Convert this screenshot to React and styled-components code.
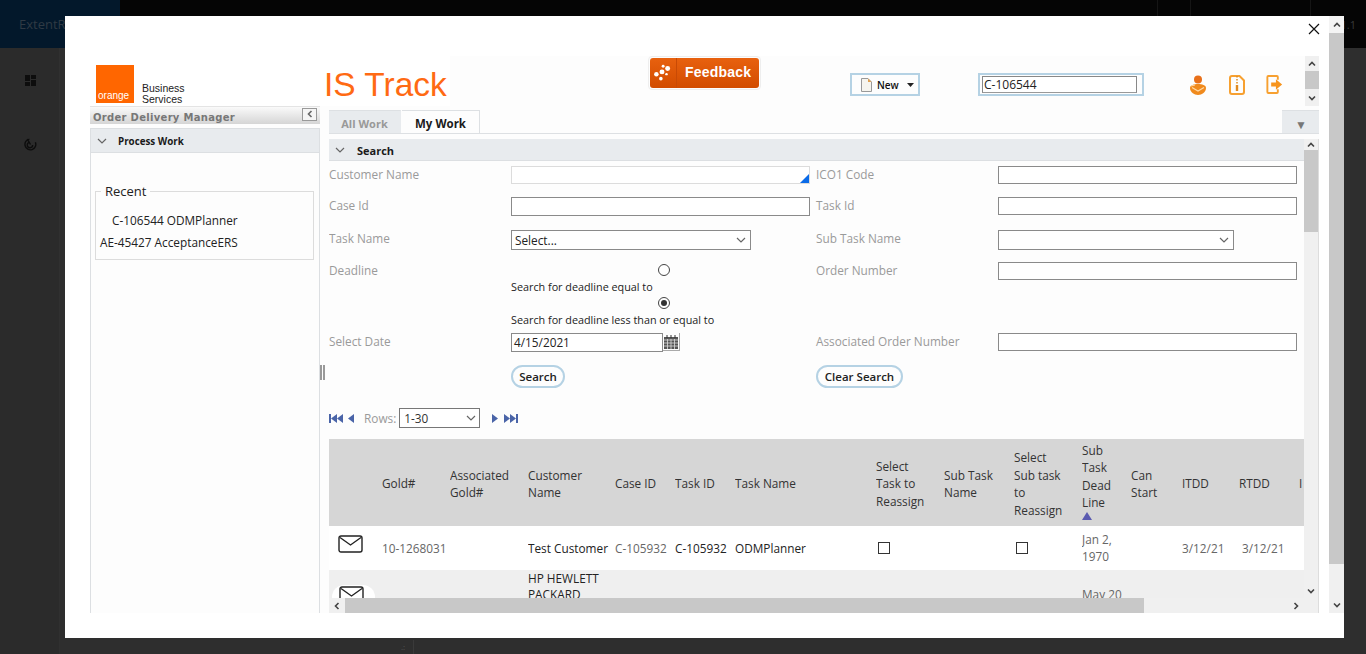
import React from "react";
import styled, { createGlobalStyle } from "styled-components";

const Global = createGlobalStyle`
  html, body { margin: 0; padding: 0; height: 100%; overflow: hidden; background: #2e2e2e; }
  #root { height: 100%; }
  * { box-sizing: border-box; }
`;

const Shell = styled.div`
  position: relative;
  width: 1366px;
  height: 654px;
  display: flex;
  flex-direction: column;
  overflow: hidden;
  font-family: "Open Sans", "Liberation Sans", sans-serif;
  font-size: 11.8px;
  color: #222;
`;
const TopBar = styled.div`
  height: 48px;
  flex: none;
  display: flex;
  align-items: center;
  background: #050505;
  color: #2f3a44;
  font-size: 13px;
`;
const Brand = styled.div`
  width: 120px;
  height: 100%;
  padding-left: 19px;
  display: flex;
  align-items: center;
  background: #03182b;
`;
const TopCell = styled.div`
  width: ${(p) => p.$w}px;
  height: 100%;
  flex: none;
  margin-left: ${(p) => (p.$first ? "auto" : "0")};
  border-left: 1px solid #151515;
  display: flex;
  align-items: center;
  justify-content: flex-end;
  padding-right: 10px;
  color: #3a3a3a;
  font-size: 11px;
`;
const BackBody = styled.div`
  flex: 1;
  display: flex;
`;
const Rail = styled.div`
  width: 60px;
  background: #2b2b2b;
  border-right: 1px solid #303030;
  padding: 27px 0 0 2px;
  display: flex;
  flex-direction: column;
  align-items: center;
  gap: 52px;
  color: #101010;
`;
const Foot = styled.div`
  margin: auto 0 0 341px;
  width: 13px;
  height: 14px;
  border-right: 1px solid #3a3a3a;
  color: #555;
  font-size: 8px;
  line-height: 14px;
`;

const Modal = styled.div`
  position: absolute;
  left: 65px;
  top: 16px;
  width: 1279px;
  height: 622px;
  background: #fff;
  padding: 0 0 25px 25px;
  display: flex;
  overflow: hidden;
`;
const Close = styled.div`
  position: absolute;
  left: 1243px;
  top: 7px;
  width: 12px;
  height: 12px;
  color: #111;
  line-height: 0;
`;
const Frame = styled.div`
  width: 1229px;
  margin-top: 40px;
  display: flex;
  flex-direction: column;
  background: #fdfdfd;
`;
const OuterBar = styled.div`
  width: 15px;
  margin-left: 10px;
  display: flex;
  flex-direction: column;
  background: #f0f0f0;
`;
const Header = styled.div`
  height: 50px;
  flex: none;
  display: flex;
  align-items: flex-start;
`;
const LogoArea = styled.div`
  width: 360px;
  height: 50px;
  padding: 9px 0 0 6px;
  display: flex;
  background: #fff;
`;
const OrangeSquare = styled.div`
  width: 38px;
  height: 38px;
  background: #ff6600;
  color: #fff;
  font: 400 10px/1 "Liberation Sans", sans-serif;
  display: flex;
  align-items: flex-end;
  padding: 0 0 2px 2px;
  flex: none;
`;
const Business = styled.div`
  margin: 18px 0 0 8px;
  width: 182px;
  font: 10.5px/11px "Liberation Sans", sans-serif;
  color: #222;
  flex: none;
`;
const AppTitle = styled.div`
  font: 33.5px/40px "Liberation Sans", sans-serif;
  color: #ff6a13;
  white-space: nowrap;
`;
const Feedback = styled.div`
  margin-left: 198px;
  width: 113px;
  height: 34px;
  border: 1px solid #eee;
  border-radius: 4px;
  padding: 1px;
  flex: none;
`;
const FeedbackInner = styled.div`
  height: 100%;
  border-radius: 3px;
  background: linear-gradient(#e8610f, #d24c00);
  display: flex;
  align-items: center;
  color: #fff;
  font: 700 14px "Liberation Sans", sans-serif;
  letter-spacing: 0.2px;
`;
const FeedIcon = styled.span`
  width: 27px;
  height: 100%;
  flex: none;
  display: flex;
  align-items: center;
  justify-content: center;
  padding-right: 3px;
  border-right: 1px solid #c94a05;
  margin-right: 8px;
`;
const FeedText = styled.span`
  margin-top: -2px;
`;
const NewBtn = styled.div`
  margin: 17px 0 0 89px;
  width: 70px;
  height: 23px;
  border: 2px solid #b5d2e4;
  display: flex;
  align-items: center;
  padding-left: 9px;
  gap: 5px;
  font-size: 10px;
  font-weight: 600;
  color: #111;
  flex: none;
`;
const SearchBox = styled.div`
  margin: 17px 0 0 58px;
  width: 166px;
  height: 23px;
  border: 2px solid #b5d2e4;
  padding: 1px 5px 1px 2px;
  flex: none;
`;
const SearchValue = styled.div`
  height: 100%;
  border: 1px solid #888;
  border-bottom-color: #999;
  background: #fff;
  padding-left: 1px;
  font-size: 12px;
  line-height: 16px;
  color: #222;
`;
const HeadIcons = styled.div`
  margin: 19px 0 0 45px;
  width: 94px;
  display: flex;
  justify-content: space-between;
  flex: none;
`;
const HeadBar = styled.div`
  width: 14px;
  height: 50px;
  margin-left: 22px;
  background: #f0f0f0;
  display: flex;
  flex-direction: column;
  flex: none;
`;
const Arrow = styled.div`
  height: ${(p) => p.$h || 15}px;
  width: ${(p) => p.$w || "100%"};
  margin-bottom: ${(p) => p.$mb || 0}px;
  flex: none;
  display: flex;
  align-items: center;
  justify-content: center;
  background: ${(p) => p.$bg || "transparent"};
  color: #444;
`;
const Thumb = styled.div`
  background: #c8c8c8;
  flex: none;
  height: ${(p) => (p.$h ? `${p.$h}px` : "auto")};
  width: ${(p) => (p.$w ? `${p.$w}px` : "auto")};
`;
const Spacer = styled.div`
  flex: 1;
`;

const Content = styled.div`
  flex: 1;
  min-height: 0;
  display: flex;
`;
const Sidebar = styled.div`
  width: 230px;
  flex: none;
  display: flex;
  flex-direction: column;
`;
const SideTitle = styled.div`
  height: 18px;
  flex: none;
  background: linear-gradient(#fafafa, #d5d5d5);
  border-top: 1px solid #e4e4e4;
  display: flex;
  align-items: center;
  justify-content: space-between;
  padding: 3px 3px 0 3px;
  font: 700 10px "DejaVu Sans", sans-serif;
  letter-spacing: 0.3px;
  color: #777;
`;
const Collapse = styled.div`
  width: 15px;
  height: 13px;
  margin-top: -6px;
  border: 1px solid #999;
  background: #f5f5f5;
  display: flex;
  align-items: center;
  justify-content: center;
  color: #555;
`;
const SidePanel = styled.div`
  margin-top: 4px;
  flex: 1;
  border: 1px solid #dcdfe2;
  border-bottom: none;
  display: flex;
  flex-direction: column;
`;
const PanelHead = styled.div`
  height: ${(p) => p.$h || 24}px;
  flex: none;
  background: #e8ebee;
  border-bottom: 1px solid #dcdfe2;
  display: flex;
  align-items: center;
  padding: 1px 0 0 ${(p) => p.$pad || 6}px;
  gap: ${(p) => p.$gap || 11}px;
  font-weight: 700;
  font-size: ${(p) => p.$size || 9.8}px;
  color: #1a1a1a;
`;
const Fieldset = styled.fieldset`
  margin: 29px 5px 0 4px;
  padding: 9px 4px 0;
  height: 78px;
  border: 1px solid #dcdcdc;
  min-width: 0;
`;
const Legend = styled.legend`
  font-size: 13px;
  line-height: 18px;
  padding: 0 4px;
  margin-left: 1px;
  color: #222;
`;
const RecentRow = styled.div`
  height: 22px;
  line-height: 22px;
  padding-left: ${(p) => (p.$in ? 12 : 0)}px;
  color: #222;
`;
const Splitter = styled.div`
  width: 9px;
  flex: none;
  padding-top: 259px;
`;
const Grip = styled.div`
  width: 5px;
  height: 15px;
  border-left: 2px solid #999;
  border-right: 2px solid #999;
`;
const MainCol = styled.div`
  width: 990px;
  flex: none;
  display: flex;
  flex-direction: column;
  margin-top: 4px;
`;
const Tabs = styled.div`
  height: 24px;
  flex: none;
  display: flex;
  border-bottom: 1px solid #dde0e3;
`;
const Tab = styled.div`
  width: ${(p) => p.$w}px;
  margin-right: 1px;
  padding-top: ${(p) => (p.$on ? 3 : 2)}px;
  display: flex;
  align-items: center;
  justify-content: center;
  background: ${(p) => (p.$on ? "#fdfdfd" : "#e8ebee")};
  color: ${(p) => (p.$on ? "#1a1a1a" : "#999")};
  font-size: ${(p) => (p.$on ? 11.5 : 11)}px;
  font-weight: 700;
  border-top: 1px solid #dde0e3;
  border-right: 1px solid ${(p) => (p.$on ? "#dde0e3" : "transparent")};
`;
const TabMenu = styled.div`
  margin-left: auto;
  width: 37px;
  background: #e8ebee;
  color: #777;
  font-size: 12px;
  display: flex;
  align-items: center;
  justify-content: center;
  border-top: 1px solid #dde0e3;
  padding: 4px 0 0 1px;
`;
const Work = styled.div`
  flex: 1;
  min-height: 0;
  margin-top: 5px;
  display: flex;
`;
const WorkLeft = styled.div`
  width: 975px;
  flex: none;
  display: flex;
  flex-direction: column;
  overflow: hidden;
`;
const Form = styled.div`
  display: grid;
  grid-template-columns: 182px 299px 6px 182px 299px;
  grid-template-rows: 31px 33px 32px 71px 32px 23px;
  padding-top: 5px;
  height: 227px;
  flex: none;
`;
const Label = styled.div`
  grid-column: ${(p) => (p.$right ? 4 : 1)};
  color: #9a9a9a;
  font-size: 11.8px;
  line-height: 17px;
`;
const Field = styled.div`
  grid-column: ${(p) => (p.$col ? p.$col : p.$right ? 5 : 2)};
  min-width: 0;
`;
const TextInput = styled.div`
  width: ${(p) => p.$w || "100%"};
  height: ${(p) => p.$h || 18}px;
  background: #fff;
  border: 1px solid ${(p) => (p.$light ? "#dcdcdc" : "#8a8a8a")};
  position: relative;
  padding-left: 2px;
  font-size: 11.8px;
  line-height: 17px;
  color: #222;
`;
const Corner = styled.span`
  position: absolute;
  right: 0;
  bottom: 0;
  width: 0;
  height: 0;
  border-left: 9px solid transparent;
  border-bottom: 9px solid #0b6be8;
`;
const SelectBox = styled.div`
  width: ${(p) => p.$w};
  height: 20px;
  border: 1px solid #8a8a8a;
  background: #fff;
  display: flex;
  align-items: center;
  justify-content: space-between;
  padding: 0 4px 0 3px;
  color: #222;
`;
const DateRow = styled.div`
  display: flex;
  align-items: flex-start;
`;
const CalIcon = styled.div`
  width: 17px;
  height: 18px;
  flex: none;
  display: flex;
  align-items: center;
  justify-content: center;
  border-right: 1px solid #aaa;
  border-bottom: 1px solid #aaa;
`;
const RadioWrap = styled.div`
  display: flex;
  flex-direction: column;
  align-items: flex-start;
`;
const RadioLine = styled.div`
  height: 16px;
  width: 100%;
  padding-left: 147px;
  display: flex;
  align-items: center;
`;
const Radio = styled.span`
  width: 12px;
  height: 12px;
  border-radius: 50%;
  border: 1px solid #444;
  background: #fff;
  display: flex;
  align-items: center;
  justify-content: center;
  &::after {
    content: "";
    width: 6px;
    height: 6px;
    border-radius: 50%;
    background: ${(p) => (p.$on ? "#333" : "transparent")};
  }
`;
const RadioText = styled.div`
  height: 17px;
  line-height: 17px;
  font-size: 10.8px;
  white-space: nowrap;
  color: #222;
`;
const Pill = styled.div`
  width: ${(p) => p.$w}px;
  height: 23px;
  border: 2px solid #b5d2e4;
  border-radius: 12px;
  padding-bottom: 1px;
  display: flex;
  align-items: center;
  justify-content: center;
  font-size: 11.5px;
  font-weight: 600;
  color: #222;
`;
const Pager = styled.div`
  height: 20px;
  margin-top: 20px;
  flex: none;
  display: flex;
  align-items: center;
  color: #9a9a9a;
`;
const PagerGap = styled.span`
  width: ${(p) => p.$w}px;
  flex: none;
`;
const RowsBox = styled.div`
  width: 81px;
  height: 20px;
  margin: 0 12px 0 3px;
  border: 1px solid #777;
  background: #fff;
  display: flex;
  align-items: center;
  justify-content: space-between;
  padding: 0 3px 0 4px;
  color: #333;
`;
const TableClip = styled.div`
  margin-top: 11px;
  height: 159px;
  flex: none;
  overflow: hidden;
  position: relative;
`;
const Table = styled.table`
  border-collapse: collapse;
  table-layout: fixed;
  width: 975px;
  line-height: 17px;
`;
const Th = styled.th`
  height: 87px;
  background: #d6d6d6;
  text-align: left;
  font-weight: 400;
  line-height: 17.5px;
  color: #333;
  padding: ${(p) => p.$pt ?? 3}px ${(p) => p.$pr ?? 9}px ${(p) => p.$pb ?? 0}px 0;
  vertical-align: middle;
  overflow: hidden;
`;
const Tr = styled.tr`
  background: ${(p) => (p.$alt ? "#efefef" : "#fff")};
`;
const Td = styled.td`
  height: ${(p) => p.$h || 44}px;
  padding: ${(p) => p.$pt || 0}px 0 0 ${(p) => p.$pl || 0}px;
  white-space: ${(p) => (p.$wrap ? "normal" : "nowrap")};
  color: ${(p) => (p.$dim ? "#666" : "#222")};
  vertical-align: ${(p) => p.$va || "middle"};
  line-height: ${(p) => p.$lh || 17}px;
  overflow: hidden;
`;
const MailCell = styled.div`
  padding: 0 0 9px 9px;
  line-height: 0;
`;
const Check = styled.span`
  display: block;
  width: 12px;
  height: 12px;
  margin-left: 2px;
  border: 1px solid #333;
  background: #fff;
`;
const Badge = styled.span`
  position: absolute;
  left: 3px;
  bottom: 0;
  width: 43px;
  height: 13px;
  background: #fff;
  border-radius: 12px 12px 0 0;
  padding: 1px 0 0 7px;
  overflow: hidden;
  line-height: 0;
`;
const HBar = styled.div`
  height: 15px;
  flex: none;
  background: #f0f0f0;
  display: flex;
  align-items: stretch;
`;
const VBar = styled.div`
  width: 15px;
  flex: none;
  background: #f0f0f0;
  border-right: 1px solid #ddd;
  display: flex;
  flex-direction: column;
`;

const Caret = ({ d = "up", c = "#444" }) => {
  const p = {
    up: "M1 5.500 L4 2.500 L7 5.500",
    down: "M1 2.500 L4 5.500 L7 2.500",
    left: "M5.500 1 L2.500 4 L5.500 7",
    right: "M2.500 1 L5.500 4 L2.500 7",
  }[d];
  return (
    <svg width="8" height="8" viewBox="0 0 8 8" fill="none" stroke={c} strokeWidth="1.6">
      <path d={p} />
    </svg>
  );
};
const Chevron = () => (
  <svg width="10" height="10" viewBox="0 0 10 10" fill="none" stroke="#666" strokeWidth="1.2">
    <path d="M1 3 L5 7 L9 3" />
  </svg>
);
const Mail = () => (
  <svg width="25" height="18" viewBox="0 0 25 18" fill="none" stroke="#222" strokeWidth="1.4">
    <rect x="1" y="1" width="23" height="16" rx="2" />
    <path d="M2 2.500 L12.500 10 L23 2.500" />
  </svg>
);
const PagerTri = ({ dir, bar, dbl }) => {
  const w = dbl ? 14 : 7;
  return (
    <svg width={w} height="11" viewBox={`0 0 ${w} 11`} fill="#4a64a8" style={{ transform: dir === "l" ? "scaleX(-1)" : "none" }}>
      <path d="M0 1 L6 5.500 L0 10 Z" />
      {dbl && <path d="M6 1 L12 5.500 L6 10 Z" />}
      {bar && <rect x="12" y="1" width="2" height="9" />}
    </svg>
  );
};

const columns = [53, 68, 78, 87, 60, 60, 141, 68, 70, 68, 49, 51, 57, 60, 5];

const headers = ["", "Gold#", "Associated Gold#", "Customer Name", "Case ID", "Task ID", "Task Name", "Select Task to Reassign", "Sub Task Name", "Select Sub task to Reassign", "Sub Task Dead Line", "Can Start", "ITDD", "RTDD", "I"];

const emptyCells = (n) => Array.from({ length: n }, (_, i) => <Td key={i} $h={60} />);

export default function App() {
  return (
    <Shell>
      <Global />
      <TopBar>
        <Brand>ExtentReports</Brand>
        <TopCell $first $w={33} />
        <TopCell $w={120} />
        <TopCell $w={56}>1.1</TopCell>
      </TopBar>
      <BackBody>
        <Rail>
          <svg width="11" height="11" viewBox="0 0 11 11" fill="#0d0d0d"><rect width="5" height="6" /><rect x="6" width="5" height="4" /><rect y="7" width="5" height="4" /><rect x="6" y="5" width="5" height="6" /></svg>
          <svg width="13" height="13" viewBox="0 0 12 12" fill="none" stroke="#0d0d0d" strokeWidth="1.3"><path d="M5 1 A5 5 0 1 0 10.500 4" /><path d="M5 4 A2.500 2.500 0 1 0 8 6.500" /><path d="M6 6 L3 1" /></svg>
        </Rail>
        <Foot>.:</Foot>
      </BackBody>

      <Modal>
        <Close>
          <svg width="12" height="12" viewBox="0 0 12 12" stroke="#111" strokeWidth="1.2"><path d="M1 1 L11 11 M11 1 L1 11" /></svg>
        </Close>
        <Frame>
          <Header>
            <LogoArea>
              <OrangeSquare>orange</OrangeSquare>
              <Business>Business<br />Services</Business>
              <AppTitle>IS Track</AppTitle>
            </LogoArea>
            <Feedback>
              <FeedbackInner>
                <FeedIcon>
                  <svg width="18" height="18" viewBox="0 0 16 16" fill="#fff"><circle cx="3" cy="9" r="2" /><circle cx="8" cy="7" r="2.200" /><circle cx="13" cy="4" r="2.200" /><circle cx="9" cy="2" r="1.300" /><circle cx="7" cy="13" r="1.600" /><circle cx="12" cy="9" r="1.100" /></svg>
                </FeedIcon>
                <FeedText>Feedback</FeedText>
              </FeedbackInner>
            </Feedback>
            <NewBtn>
              <svg width="11" height="14" viewBox="0 0 11 14"><path d="M.5.5 H7 L10.500 4 V13.500 H.5 Z" fill="#f6f4ee" stroke="#999" /><path d="M7 .5 V4 H10.500 Z" fill="#e0a050" /></svg>
              New
              <svg width="7" height="4" viewBox="0 0 7 4" fill="#222" style={{ marginLeft: 3 }}><path d="M0 0 H7 L3.500 4 Z" /></svg>
            </NewBtn>
            <SearchBox>
              <SearchValue>C-106544</SearchValue>
            </SearchBox>
            <HeadIcons>
              <svg width="18" height="21" viewBox="0 0 18 21" fill="#f08a1d"><circle cx="9" cy="4.500" r="4" fill="#e8701a" /><path d="M1 13 C1 10 5 9 9 9 C13 9 17 10 17 13 C17 17 13 20 9 20 C5 20 1 17 1 13 Z" /><path d="M3 12.500 L9 16 L15 12.500" stroke="#ffd9a8" strokeWidth="1.200" fill="none" /><path d="M2 11 L6 10" stroke="#ffd9a8" strokeWidth="1" /></svg>
              <svg width="16" height="20" viewBox="0 0 16 20" fill="none" stroke="#f7a030" strokeWidth="2"><path d="M3 1 H10.500 L15 5.500 V17 A2 2 0 0 1 13 19 H3 A2 2 0 0 1 1 17 V3 A2 2 0 0 1 3 1 Z" /><path d="M8 1 V9" strokeDasharray="1.500 1.500" strokeWidth="1.500" stroke="#e08a20" /><path d="M8 10 V16" strokeWidth="2.400" stroke="#e08a20" /></svg>
              <svg width="17" height="19" viewBox="0 0 17 20" fill="none"><path d="M12 5 V2 A1 1 0 0 0 11 1 H2 A1 1 0 0 0 1 2 V18 A1 1 0 0 0 2 19 H11 A1 1 0 0 0 12 18 V15" stroke="#f7a030" strokeWidth="2" /><path d="M5 8 H10 V4.500 L16.500 10 L10 15.500 V12 H5 Z" fill="#f7941d" /></svg>
            </HeadIcons>
            <HeadBar>
              <Arrow $h={15}><Caret d="up" /></Arrow>
              <Thumb $h={18} />
              <Arrow $h={17}><Caret d="down" /></Arrow>
            </HeadBar>
          </Header>
          <Content>
            <Sidebar>
              <SideTitle>
                Order Delivery Manager
                <Collapse><Caret d="left" c="#666" /></Collapse>
              </SideTitle>
              <SidePanel>
                <PanelHead>
                  <Chevron />
                  Process Work
                </PanelHead>
                <Fieldset>
                  <Legend>Recent</Legend>
                  <RecentRow $in>C-106544 ODMPlanner</RecentRow>
                  <RecentRow>AE-45427 AcceptanceERS</RecentRow>
                </Fieldset>
              </SidePanel>
            </Sidebar>
            <Splitter><Grip /></Splitter>
            <MainCol>
              <Tabs>
                <Tab $w={72}>All Work</Tab>
                <Tab $w={78} $on>My Work</Tab>
                <TabMenu>▼</TabMenu>
              </Tabs>
              <Work>
                <WorkLeft>
                  <PanelHead $h={22} $gap={12} $size={11}>
                    <Chevron />
                    Search
                  </PanelHead>
                  <Form>
                    <Label>Customer Name</Label>
                    <Field><TextInput $light><Corner /></TextInput></Field>
                    <Label $right>ICO1 Code</Label>
                    <Field $right><TextInput /></Field>

                    <Label>Case Id</Label>
                    <Field><TextInput $h={19} /></Field>
                    <Label $right>Task Id</Label>
                    <Field $right><TextInput /></Field>

                    <Label>Task Name</Label>
                    <Field><SelectBox $w="240px">Select...<Chevron /></SelectBox></Field>
                    <Label $right>Sub Task Name</Label>
                    <Field $right><SelectBox $w="236px"><span /><Chevron /></SelectBox></Field>

                    <Label>Deadline</Label>
                    <Field>
                      <RadioWrap>
                        <RadioLine><Radio /></RadioLine>
                        <RadioText>Search for deadline equal to</RadioText>
                        <RadioLine><Radio $on /></RadioLine>
                        <RadioText>Search for deadline less than or equal to</RadioText>
                      </RadioWrap>
                    </Field>
                    <Label $right>Order Number</Label>
                    <Field $right><TextInput /></Field>

                    <Label>Select Date</Label>
                    <Field>
                      <DateRow>
                        <TextInput $w="152px" $h={19}>4/15/2021</TextInput>
                        <CalIcon>
                          <svg width="14" height="14" viewBox="0 0 14 14"><path d="M0 2 H14 V14 H0 Z" fill="#555" /><path d="M0 5 H14 M0 8 H14 M0 11 H14 M3.500 4 V14 M7 4 V14 M10.500 4 V14" stroke="#ddd" strokeWidth="0.8" /><path d="M3 0 V3 M7 0 V3 M11 0 V3" stroke="#333" /></svg>
                        </CalIcon>
                      </DateRow>
                    </Field>
                    <Label $right>Associated Order Number</Label>
                    <Field $right><TextInput /></Field>

                    <Field $col={2}><Pill $w={54}>Search</Pill></Field>
                    <Field $col={4}><Pill $w={87}>Clear Search</Pill></Field>
                  </Form>
                  <Pager>
                    <PagerTri dir="l" bar dbl />
                    <PagerGap $w={4} />
                    <PagerTri dir="l" />
                    <PagerGap $w={10} />
                    Rows:
                    <RowsBox>1-30<Chevron /></RowsBox>
                    <PagerTri dir="r" />
                    <PagerGap $w={5} />
                    <PagerTri dir="r" bar dbl />
                  </Pager>
                  <TableClip>
                    <Table>
                      <colgroup>
                        {columns.map((w, i) => <col key={i} style={{ width: w }} />)}
                      </colgroup>
                      <thead>
                        <tr>
                          {headers.map((h, i) => (
                            <Th key={i} $pr={i === 9 ? 14 : i === 14 ? 0 : 9} $pt={i === 10 ? 0 : 3} $pb={i === 10 ? 4 : 0}>
                              {h}
                              {i === 10 && (
                                <svg width="10" height="8" viewBox="0 0 10 8" style={{ display: "block" }}><path d="M5 0 L10 8 H0 Z" fill="#5a5ab0" /></svg>
                              )}
                            </Th>
                          ))}
                        </tr>
                      </thead>
                      <tbody>
                        <Tr>
                          <Td><MailCell><Mail /></MailCell></Td>
                          <Td $dim>10-1268031</Td>
                          <Td />
                          <Td>Test Customer</Td>
                          <Td $dim>C-105932</Td>
                          <Td>C-105932</Td>
                          <Td>ODMPlanner</Td>
                          <Td><Check /></Td>
                          <Td />
                          <Td><Check /></Td>
                          <Td $wrap $dim>Jan 2, 1970</Td>
                          <Td />
                          <Td $dim>3/12/21</Td>
                          <Td $dim $pl={3}>3/12/21</Td>
                          <Td />
                        </Tr>
                        <Tr $alt>
                          <Td $h={60} />
                          <Td $h={60} />
                          <Td $h={60} />
                          <Td $h={60} $wrap $va="top" $lh={16}>HP HEWLETT PACKARD</Td>
                          {emptyCells(6)}
                          <Td $h={60} $va="top" $pt={16} $dim>May 20</Td>
                          {emptyCells(4)}
                        </Tr>
                      </tbody>
                    </Table>
                    <Badge><Mail /></Badge>
                  </TableClip>
                  <HBar>
                    <Arrow $h={15} $w="16px"><Caret d="left" /></Arrow>
                    <Thumb $w={799} />
                    <Spacer />
                    <Arrow $h={15} $w="16px"><Caret d="right" /></Arrow>
                  </HBar>
                </WorkLeft>
                <VBar>
                  <Arrow $h={11}><Caret d="up" /></Arrow>
                  <Thumb $h={82} />
                  <Spacer />
                  <Arrow $h={15} $mb={15}><Caret d="down" /></Arrow>
                </VBar>
              </Work>
            </MainCol>
          </Content>
        </Frame>
        <OuterBar>
          <Arrow $h={17} $bg="#f4f4f4"><Caret d="up" /></Arrow>
          <Thumb $h={531} />
          <Spacer />
          <Arrow $h={17}><Caret d="down" /></Arrow>
        </OuterBar>
      </Modal>
    </Shell>
  );
}
